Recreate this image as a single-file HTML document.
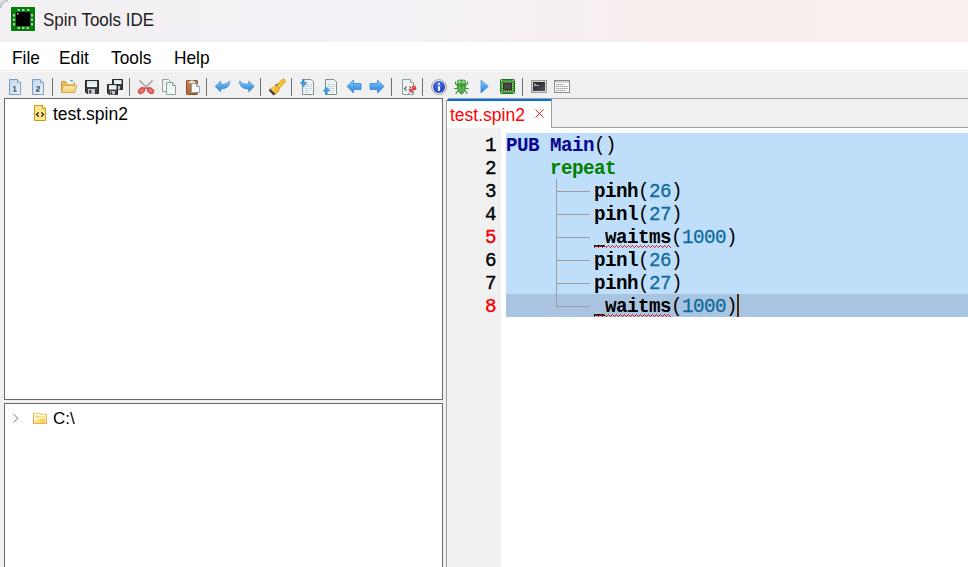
<!DOCTYPE html>
<html><head><meta charset="utf-8">
<style>
*{box-sizing:border-box}
html,body{margin:0;padding:0;width:968px;height:567px;overflow:hidden;background:#f0f0f0;font-family:"Liberation Sans",sans-serif}
.abs{position:absolute}
#title{left:0;top:0;width:968px;height:42px;background:linear-gradient(to right,#f3f0f4 0%,#f3f1f5 42%,#f8eeee 68%,#f8efee 100%)}
#title .t{left:43px;top:10px;font-size:17.8px;color:#1c1c1c;line-height:20px;white-space:nowrap;transform:scaleX(0.955);transform-origin:0 0}
#menu{left:0;top:42px;width:968px;height:28px;background:#fff}
#menu span{position:absolute;top:6px;font-size:19px;line-height:20px;color:#000;transform:scaleX(0.91);transform-origin:0 0}
#mline{left:0;top:70px;width:968px;height:1px;background:#ededed}
#tb{left:0;top:71px;width:968px;height:27px;background:#f0f0f0;border-top:1px solid #fcfcfc}
.sep{position:absolute;top:78px;width:1px;height:18px;background:#777}
.ico{position:absolute;top:79px;width:16px;height:16px}
#lp1{left:4px;top:98px;width:439px;height:302px;background:#fff;border:1px solid #6a6a6a;border-right-width:1px}
#lp2{left:4px;top:403px;width:439px;height:170px;background:#fff;border:1px solid #6a6a6a}
#ed{left:446px;top:98px;width:530px;height:480px;background:#fff;border-left:1px solid #a0a0a0}
#tabstrip{left:447px;top:98px;width:521px;height:30px;background:#f0f0f0;border-top:1px solid #a0a0a0;border-bottom:1px solid #a0a0a0}
#tab{left:447px;top:99px;width:105px;height:29px;background:#fff;border-top:2px solid #0272d8;border-right:1px solid #a0a0a0}
#tab .t{position:absolute;left:3px;top:4px;font-size:17.5px;line-height:20px;color:#ff0000;white-space:nowrap}
#gutter{left:447px;top:128px;width:54px;height:440px;background:#f0f0f0}
.sel{position:absolute;left:506px;width:462px;height:23px;background:#bfdefa}
.sel.cur{background:#a9c4e0}
.ln{position:absolute;left:447px;width:49px;text-align:right;font:19.2px/23px "Liberation Mono",monospace;letter-spacing:-0.52px;color:#000;margin-top:2px;-webkit-text-stroke:0.35px currentColor;transform:scaleY(1.07);transform-origin:50% 16.6px}
.ln.err{color:#f00000}
.code{position:absolute;left:506px;font:bold 19.2px/23px "Liberation Mono",monospace;letter-spacing:-0.52px;color:#000;white-space:pre;margin-top:2px;transform:scaleY(1.06);transform-origin:0 16.6px}
.kw{color:#0a0490}
.kg{color:#008000}
.num{color:#0f6a9c;font-weight:normal;-webkit-text-stroke:0.25px #0f6a9c}
.p{font-weight:normal;display:inline-block;transform:scaleY(1.035);transform-origin:50% 90%}
.gv{position:absolute;left:556px;width:1px;background:#9d9d9d}
.gh{position:absolute;left:556px;width:34px;height:1px;background:#9d9d9d}
</style></head><body>
<div id="title" class="abs">
<svg class="abs" style="left:0;top:0" width="42" height="42" viewBox="0 0 42 42">
<path d="M0,0H7A7,7 0 0 0 0,7Z" fill="#e2e0e2"/><path d="M0.6,8A7.6,7.6 0 0 1 8,0.6" fill="none" stroke="#b8b8b8" stroke-width="1.4"/>
<rect x="10" y="6" width="26" height="26" fill="#fdf8fd"/>
<rect x="11" y="7" width="24" height="24" fill="#008000"/>
<rect x="16" y="12" width="14" height="14" fill="#000"/>
<rect x="17" y="13" width="1.5" height="1.5" fill="#c8c0c8"/>
<g fill="#c6b9c6">
<rect x="17.5" y="9" width="2.5" height="2"/><rect x="22" y="9" width="2.5" height="2"/><rect x="27" y="9" width="2.5" height="2"/>
<rect x="17.5" y="27" width="2.5" height="2"/><rect x="22" y="27" width="2.5" height="2"/><rect x="26.5" y="27" width="2.5" height="2"/>
<rect x="13" y="14" width="2" height="2.5"/><rect x="13" y="18.5" width="2" height="2.5"/><rect x="13" y="23" width="2" height="2.5"/>
<rect x="31" y="14" width="2" height="2.5"/><rect x="31" y="18.5" width="2" height="2.5"/><rect x="31" y="23" width="2" height="2.5"/>
</g>
</svg>
  <div class="abs t">Spin Tools IDE</div>
</div>
<div id="menu" class="abs">
  <span style="left:12px">File</span>
  <span style="left:59px">Edit</span>
  <span style="left:111px">Tools</span>
  <span style="left:174px">Help</span>
</div>
<div id="mline" class="abs"></div>
<div id="tb" class="abs"></div>

<div id="lp1" class="abs"></div>
<div class="abs" style="left:53px;top:104px;font-size:17.5px;line-height:20px;color:#000">test.spin2</div>
<svg class="abs" style="left:0;top:0" width="968" height="130" viewBox="0 0 968 130">
<defs>
 <linearGradient id="gPage" x1="0" y1="0" x2="1" y2="1"><stop offset="0" stop-color="#bcd6ee"/><stop offset="1" stop-color="#eaf5fd"/></linearGradient>
 <linearGradient id="gDoc" x1="0" y1="0" x2="1" y2="1"><stop offset="0" stop-color="#e4eeee"/><stop offset="1" stop-color="#fbfdfd"/></linearGradient>
 <linearGradient id="gLabel" x1="0" y1="0" x2="0" y2="1"><stop offset="0" stop-color="#cfe4e6"/><stop offset="1" stop-color="#f4fafa"/></linearGradient>
 <linearGradient id="gArrow" x1="0" y1="0" x2="0" y2="1"><stop offset="0" stop-color="#a6d6fa"/><stop offset="0.45" stop-color="#52a8ee"/><stop offset="1" stop-color="#2c84da"/></linearGradient>
 <linearGradient id="gClip" x1="0" y1="0" x2="1" y2="1"><stop offset="0" stop-color="#d08a50"/><stop offset="1" stop-color="#9a5424"/></linearGradient>
 <radialGradient id="gInfo" cx="0.45" cy="0.35" r="0.7"><stop offset="0" stop-color="#4a7ae8"/><stop offset="1" stop-color="#1a3cc0"/></radialGradient>
 <linearGradient id="gFold" x1="0" y1="0" x2="0" y2="1"><stop offset="0" stop-color="#fbe7a8"/><stop offset="1" stop-color="#efcf78"/></linearGradient>
 <linearGradient id="gTerm" x1="0" y1="0" x2="1" y2="1"><stop offset="0" stop-color="#202024"/><stop offset="1" stop-color="#50505a"/></linearGradient>
</defs>
<!-- page 1 -->
<path d="M9.5,79.5H17.5L20.5,82.5V94.5H9.5Z" fill="url(#gPage)" stroke="#7e9fc2"/>
<path d="M17.5,79.5V82.5H20.5" fill="#f4f8fc" stroke="#7e9fc2"/>
<path d="M13.2,87.4L14.8,86.4V91M13.4,91.1H16.6" fill="none" stroke="#505050" stroke-width="1.1"/>
<!-- page 2 -->
<path d="M32.5,79.5H40.5L43.5,82.5V94.5H32.5Z" fill="url(#gPage)" stroke="#7e9fc2"/>
<path d="M40.5,79.5V82.5H43.5" fill="#f4f8fc" stroke="#7e9fc2"/>
<path d="M36.4,86.9H39.4V88.5L36.6,90.1V91.1H39.8" fill="none" stroke="#505050" stroke-width="1.1"/>
<!-- folder open -->
<path d="M61.5,92.5V81.5H65.5L66.5,82.5H74.5V92.5Z" fill="#e4bc66" stroke="#c9a048"/>
<rect x="67.5" y="80.3" width="6" height="3.5" fill="#fbfbfb"/>
<rect x="70" y="80.2" width="3" height="1.3" fill="#3aa8ea"/>
<path d="M61.5,92.5L63.2,85.5H76.8L74.8,92.5Z" fill="url(#gFold)" stroke="#d4aa52"/>
<!-- save -->
<path d="M85.5,80.5H98.5V93.5H87L85.5,92Z" fill="#3c3c3c" stroke="#262626"/>
<rect x="87" y="81" width="10" height="6" fill="url(#gLabel)"/>
<rect x="88" y="89" width="7" height="5" fill="#c6c6d0"/>
<rect x="89.3" y="90" width="1.8" height="3.5" fill="#303030"/>
<!-- save all -->
<path d="M112.5,79.5H122.5V89.5H114L112.5,88Z" fill="#3c3c3c" stroke="#262626"/>
<rect x="114" y="80" width="7.5" height="4" fill="url(#gLabel)"/>
<rect x="115" y="86" width="5" height="3.5" fill="#c6c6d0"/>
<path d="M107.5,84.5H117.5V94.5H109L107.5,93Z" fill="#3c3c3c" stroke="#262626"/>
<rect x="109" y="85" width="7.5" height="4.5" fill="url(#gLabel)"/>
<rect x="110" y="91" width="5" height="3.5" fill="#c6c6d0"/>
<rect x="110.8" y="91.6" width="1.3" height="2.5" fill="#303030"/>
<!-- scissors -->
<path d="M139.5,80.5L148,89M152.5,80.5L144,89" stroke="#8c8c8c" stroke-width="1.6" fill="none"/>
<path d="M139.8,80.8L147.5,88.5M152.2,80.8L144.5,88.5" stroke="#f0f0f0" stroke-width="0.5" fill="none"/>
<ellipse cx="141.5" cy="90.6" rx="3.3" ry="2.2" transform="rotate(-40 141.5 90.6)" fill="#f2a4a4" stroke="#dc3c3c" stroke-width="1.4"/>
<ellipse cx="150.5" cy="90.6" rx="3.3" ry="2.2" transform="rotate(40 150.5 90.6)" fill="#f2a4a4" stroke="#dc3c3c" stroke-width="1.4"/>
<path d="M140.2,91.9L142.8,89.3M151.8,91.9L149.2,89.3" stroke="#c42a2a" stroke-width="0.8"/>
<rect x="145.3" y="87.3" width="1.4" height="1.4" fill="#cc2020"/>
<!-- copy -->
<path d="M162.5,79.5H168.5L170.5,81.5V91.5H162.5Z" fill="url(#gDoc)" stroke="#86a4a4"/>
<path d="M166.5,82.5H172.5L175.5,85.5V94.5H166.5Z" fill="url(#gDoc)" stroke="#86a4a4"/>
<path d="M172.5,82.5V85.5H175.5" fill="#cfdede" stroke="#86a4a4"/>
<!-- paste -->
<rect x="186.5" y="80.5" width="11" height="14" rx="0.8" fill="url(#gClip)" stroke="#8a4e24"/>
<path d="M189.8,82.2Q192,78.6 194.2,82.2" stroke="#b4b4b8" stroke-width="1.1" fill="none"/>
<rect x="189" y="81.4" width="6.2" height="1.6" fill="#e6ecf2"/>
<path d="M191.5,83.5H196.5L199.5,86.5V92.5H191.5Z" fill="#f6f8f8" stroke="#8fa6a6"/>
<path d="M196.5,83.5V86.5H199.5" fill="#d6e2e2" stroke="#8fa6a6"/>
<!-- undo -->
<path d="M215.2,86.4L220.5,81.2V84.2C224.5,84.4 228,83.8 229.6,80.9C230.2,86.2 226.2,89 220.5,88.8V91.8Z" fill="url(#gArrow)" stroke="#2f7ccc" stroke-width="0.7"/>
<!-- redo -->
<path d="M254.1,86.4L248.8,81.2V84.2C244.8,84.4 241.3,83.8 239.7,80.9C239.1,86.2 243.1,89 248.8,88.8V91.8Z" fill="url(#gArrow)" stroke="#2f7ccc" stroke-width="0.7"/>
<!-- brush -->
<defs><linearGradient id="gBr" x1="0" y1="0" x2="1" y2="1"><stop offset="0" stop-color="#fde060"/><stop offset="1" stop-color="#e2a012"/></linearGradient></defs>
<path d="M277.8,86.8L283.4,81.2" stroke="#d59a16" stroke-width="4.6" stroke-linecap="round"/>
<path d="M277.8,86.8L283.4,81.2" stroke="#f6c630" stroke-width="3.2" stroke-linecap="round"/>
<path d="M269.2,89.3L274.8,94.9L278.8,90.9L279.4,88.6L276.8,86L274.5,86.6Z" fill="url(#gBr)" stroke="#cf9416" stroke-width="0.6"/>
<path d="M275.6,85.6L277.2,84" stroke="#454545" stroke-width="1.2"/>
<path d="M269.6,89.8L274.4,94.6" stroke="#3a3a46" stroke-width="2.2"/>
<!-- import doc -->
<path d="M302.5,79.5H311L313.5,82V94.5H302.5Z" fill="url(#gDoc)" stroke="#7f9090"/>
<path d="M305,84.5H312M305,86.5H312M305,88.5H312M305,90.5H311M305,92.5H309" stroke="#b4c2cc" stroke-width="0.8" stroke-dasharray="2 0.6"/>
<path d="M303.4,79V83" stroke="#2a86dc" stroke-width="2"/><path d="M300.4,82.6H306.6L303.5,86.6Z" stroke="#2a86dc" fill="#4aa4ee" stroke-width="0.8"/>
<!-- export doc -->
<path d="M325.5,79.5H334L336.5,82V94.5H325.5Z" fill="url(#gDoc)" stroke="#7f9090"/>
<path d="M328,84.5H335M328,86.5H335M328,88.5H335M330,90.5H335M331,92.5H334" stroke="#b4c2cc" stroke-width="0.8" stroke-dasharray="2 0.6"/>
<path d="M326.5,90.5V95" stroke="#2a86dc" stroke-width="2"/><path d="M323.4,91H329.6L326.5,87.2Z" stroke="#2a86dc" fill="#4aa4ee" stroke-width="0.8"/>
<!-- back -->
<path d="M347,86.5L353.5,80V83.5H361V89.5H353.5V93Z" fill="url(#gArrow)" stroke="#2f7ccc" stroke-width="0.7"/>
<!-- forward -->
<path d="M384,86.5L377.5,80V83.5H370V89.5H377.5V93Z" fill="url(#gArrow)" stroke="#2f7ccc" stroke-width="0.7"/>
<!-- doc pin -->
<path d="M402.5,79.5H410.5L413.5,82.5V94.5H402.5Z" fill="url(#gDoc)" stroke="#8aa4a4"/>
<path d="M410.5,79.5V82.5H413.5" fill="#fff" stroke="#8aa4a4"/>
<path d="M406.6,86.6L404.5,88.6L406.6,90.6M409.4,86.4L411.4,88.4" stroke="#505050" fill="none" stroke-width="1.1"/>
<path d="M409.6,92.4L408.2,93.8" stroke="#666" stroke-width="0.9"/>
<ellipse cx="410.9" cy="90.9" rx="3" ry="1.3" transform="rotate(45 410.9 90.9)" fill="#e64848"/>
<path d="M411,90.8L413.6,88.2" stroke="#e24040" stroke-width="1.6"/>
<ellipse cx="414.2" cy="87.7" rx="2.6" ry="1.9" transform="rotate(45 414.2 87.7)" fill="#dc3838"/>
<circle cx="413.8" cy="87.2" r="0.7" fill="#f6a0a0"/>
<!-- info -->
<circle cx="439" cy="87" r="7.5" fill="#e4e4e4" stroke="#9a9a9a" stroke-width="0.8"/>
<circle cx="439" cy="87" r="6" fill="url(#gInfo)"/>
<rect x="438" y="82.8" width="2" height="2" fill="#f6f2e2"/>
<rect x="438" y="86.2" width="2" height="4.8" fill="#f6f2e2"/>
<!-- bug -->
<defs><linearGradient id="gBug" x1="0" y1="0" x2="1" y2="0"><stop offset="0" stop-color="#3c9a34"/><stop offset="0.5" stop-color="#6cc45c"/><stop offset="1" stop-color="#3c9a34"/></linearGradient></defs>
<path d="M457.8,85.2L455.4,83.8L455.6,81.6M465.2,85.2L467.6,83.8L467.4,81.6M457.5,88.2L454.2,88.8M465.5,88.2L468.8,88.8M458,91L456.2,92.4L456.2,94M465,91L466.8,92.4L466.8,94" stroke="#3a8c30" stroke-width="1.1" fill="none"/>
<path d="M457.3,84.2H465.7L465.4,89.2Q463.8,93.6 461.5,94.2Q459.2,93.6 457.6,89.2Z" fill="url(#gBug)" stroke="#2f7c28" stroke-width="0.6"/>
<path d="M461.5,85V93.6M459,84.6L461.5,86.4L464,84.6" stroke="#2f7c28" stroke-width="0.7" fill="none"/>
<rect x="457.4" y="80" width="8.2" height="4.6" rx="1.6" fill="#62b854" stroke="#2f7c28" stroke-width="0.6"/>
<circle cx="459.4" cy="81.6" r="0.85" fill="#d0f4f4"/><circle cx="463.6" cy="81.6" r="0.85" fill="#d0f4f4"/>
<!-- play -->
<path d="M481,80L488.3,86.5L481,93Z" fill="url(#gArrow)" stroke="#2f7ccc" stroke-width="0.6"/>
<!-- chip -->
<rect x="500.5" y="79.5" width="14" height="14" rx="1" fill="#35a03e" stroke="#1c7226"/>
<rect x="504" y="81.6" width="1" height="1.6" fill="#e8cf70"/><rect x="504" y="90" width="1" height="1.6" fill="#e8cf70"/><rect x="506" y="81.6" width="1" height="1.6" fill="#e8cf70"/><rect x="506" y="90" width="1" height="1.6" fill="#e8cf70"/><rect x="508" y="81.6" width="1" height="1.6" fill="#e8cf70"/><rect x="508" y="90" width="1" height="1.6" fill="#e8cf70"/><rect x="510" y="81.6" width="1" height="1.6" fill="#e8cf70"/><rect x="510" y="90" width="1" height="1.6" fill="#e8cf70"/><rect x="502" y="83.0" width="1.6" height="1" fill="#e8cf70"/><rect x="511.4" y="83.0" width="1.6" height="1" fill="#e8cf70"/><rect x="502" y="85.0" width="1.6" height="1" fill="#e8cf70"/><rect x="511.4" y="85.0" width="1.6" height="1" fill="#e8cf70"/><rect x="502" y="87.0" width="1.6" height="1" fill="#e8cf70"/><rect x="511.4" y="87.0" width="1.6" height="1" fill="#e8cf70"/><rect x="502" y="89.0" width="1.6" height="1" fill="#e8cf70"/><rect x="511.4" y="89.0" width="1.6" height="1" fill="#e8cf70"/>
<rect x="501" y="80" width="1.2" height="1.2" fill="#e8cf70"/><rect x="512.8" y="80" width="1.2" height="1.2" fill="#e8cf70"/><rect x="501" y="91.8" width="1.2" height="1.2" fill="#e8cf70"/><rect x="512.8" y="91.8" width="1.2" height="1.2" fill="#e8cf70"/>
<rect x="503.6" y="83" width="7.8" height="7" fill="#484848" stroke="#1a1a1a" stroke-width="0.8"/>
<!-- terminal -->
<rect x="531.5" y="80.5" width="15" height="12" fill="#d4d4d4" stroke="#9a9a9a"/>
<rect x="533" y="82" width="12" height="9" fill="url(#gTerm)"/>
<path d="M533.8,83.4L536.2,84.8L533.8,86.2M536.5,85.5H538.8" stroke="#e0e0e0" stroke-width="0.9" fill="none"/>
<!-- window -->
<rect x="554.5" y="80.5" width="15" height="12" fill="#fcfcfc" stroke="#8a8a8a"/>
<rect x="555" y="81" width="14" height="1.6" fill="#c4c4cc"/>
<path d="M556,84.5H564M556,86.5H568M556,88.5H568M556,90.5H566" stroke="#9a9a9a" stroke-width="1" stroke-dasharray="1.5 0.5"/>
<!-- separators -->
<path d="M52.5,78V96M129.5,78V96M206.5,78V96M260.5,78V96M291.5,78V96M391.5,78V96M422.5,78V96M522.5,78V96" stroke="#6e6e6e"/>
<!-- tree file icon -->
<path d="M34.5,105.5H42.5L45.5,108.5V120.5H34.5Z" fill="#fde68c" stroke="#c9980c"/>
<path d="M42.5,105.5V108.5H45.5" fill="#fff6c8" stroke="#c9980c"/>
<path d="M38.6,112.3L36.5,114.5L38.6,116.7M41.4,112.3L43.5,114.5L41.4,116.7" stroke="#111" stroke-width="1.2" fill="none"/>
</svg>

<div id="lp2" class="abs"></div>

<svg class="abs" style="left:0;top:400px" width="60" height="40" viewBox="0 400 60 40">
<defs><linearGradient id="gF2" x1="0" y1="0" x2="0" y2="1"><stop offset="0" stop-color="#fff4c0"/><stop offset="1" stop-color="#f2c834"/></linearGradient></defs>
<path d="M13.5,414L17.8,418.3L13.5,422.6" fill="none" stroke="#7a7a7a" stroke-width="1"/>
<defs><linearGradient id="gFo" x1="0" y1="0" x2="0" y2="1"><stop offset="0" stop-color="#ebc848"/><stop offset="1" stop-color="#e4902e"/></linearGradient>
<linearGradient id="gPk" x1="0" y1="0" x2="1" y2="1"><stop offset="0" stop-color="#fff6c8"/><stop offset="1" stop-color="#f0c41c"/></linearGradient></defs>
<path d="M33.5,423.3V413.3H39.6L40.4,414.3H46.3V423.3Z" fill="#fffdf6" stroke="url(#gFo)" stroke-width="1.1"/>
<path d="M35.2,415.4H38.2L39,416.2H45V417.2H39L38.2,417.8H35.2Z" fill="#f2d878"/>
<path d="M35.2,418.6H38.5L39.3,418H45V422.4H35.2Z" fill="url(#gPk)"/>
</svg>
<div class="abs" style="left:53px;top:409px;font-size:17px;line-height:20px;color:#000">C:\</div>

<div id="ed" class="abs"></div>
<div id="tabstrip" class="abs"></div>
<div id="tab" class="abs"><div class="t">test.spin2</div></div>
<svg class="abs" style="left:530px;top:104px" width="20" height="20" viewBox="530 104 20 20"><path d="M535.5,109.5L543.5,117.5M543.5,109.5L535.5,117.5" stroke="#ff0000" stroke-width="0.9"/></svg>
<div id="gutter" class="abs"></div>
<div class="abs" style="left:446px;top:97px;width:1px;height:3px;background:#f4f4f4"></div><div class="abs" style="left:447px;top:98px;width:1px;height:1px;background:#f4f4f4"></div><div class="abs" style="left:447px;top:99px;width:1px;height:1px;background:#8ab6e4"></div>

<div class="sel" style="top:133px;height:161px"></div>
<div class="sel cur" style="top:294px"></div>

<div class="ln" style="top:133px">1</div>
<div class="ln" style="top:156px">2</div>
<div class="ln" style="top:179px">3</div>
<div class="ln" style="top:202px">4</div>
<div class="ln err" style="top:225px">5</div>
<div class="ln" style="top:248px">6</div>
<div class="ln" style="top:271px">7</div>
<div class="ln err" style="top:294px">8</div>

<div class="gv" style="top:179px;height:128px"></div>
<div class="gh" style="top:191px"></div>
<div class="gh" style="top:214px"></div>
<div class="gh" style="top:237px"></div>
<div class="gh" style="top:260px"></div>
<div class="gh" style="top:283px"></div>
<div class="gh" style="top:306px"></div>

<div class="code" style="top:133px"><span class="kw">PUB Main</span><span class="p">()</span></div>
<div class="code" style="top:156px">    <span class="kg">repeat</span></div>
<div class="code" style="top:179px">        pinh<span class="p">(</span><span class="num">26</span><span class="p">)</span></div>
<div class="code" style="top:202px">        pinl<span class="p">(</span><span class="num">27</span><span class="p">)</span></div>
<div class="code" style="top:225px">        <span style="visibility:hidden">_</span>waitms<span class="p">(</span><span class="num">1000</span><span class="p">)</span></div>
<div class="code" style="top:248px">        pinl<span class="p">(</span><span class="num">26</span><span class="p">)</span></div>
<div class="code" style="top:271px">        pinh<span class="p">(</span><span class="num">27</span><span class="p">)</span></div>
<div class="code" style="top:294px">        <span style="visibility:hidden">_</span>waitms<span class="p">(</span><span class="num">1000</span><span class="p">)</span></div>
<div class="abs" style="left:737px;top:294px;width:2px;height:23px;background:#4a2c0c"></div>
<svg class="abs" style="left:0;top:0" width="968" height="567" viewBox="0 0 968 567">
<defs><pattern id="zz" x="594" y="314" width="4" height="3" patternUnits="userSpaceOnUse">
<rect x="0" y="2" width="1" height="1" fill="#d42a2a"/><rect x="1" y="1" width="1" height="1" fill="#d42a2a"/><rect x="2" y="0" width="1" height="1" fill="#d42a2a"/><rect x="3" y="1" width="1" height="1" fill="#d42a2a"/>
</pattern>
<pattern id="zz2" x="594" y="245" width="4" height="3" patternUnits="userSpaceOnUse">
<rect x="0" y="2" width="1" height="1" fill="#d42a2a"/><rect x="1" y="1" width="1" height="1" fill="#d42a2a"/><rect x="2" y="0" width="1" height="1" fill="#d42a2a"/><rect x="3" y="1" width="1" height="1" fill="#d42a2a"/>
</pattern></defs>
<rect x="594" y="245" width="11" height="2" fill="#000"/>
<rect x="594" y="245" width="77" height="3" fill="url(#zz2)"/>
<rect x="594" y="314" width="11" height="2" fill="#000"/>
<rect x="594" y="314" width="77" height="3" fill="url(#zz)"/>
</svg>
</body></html>
